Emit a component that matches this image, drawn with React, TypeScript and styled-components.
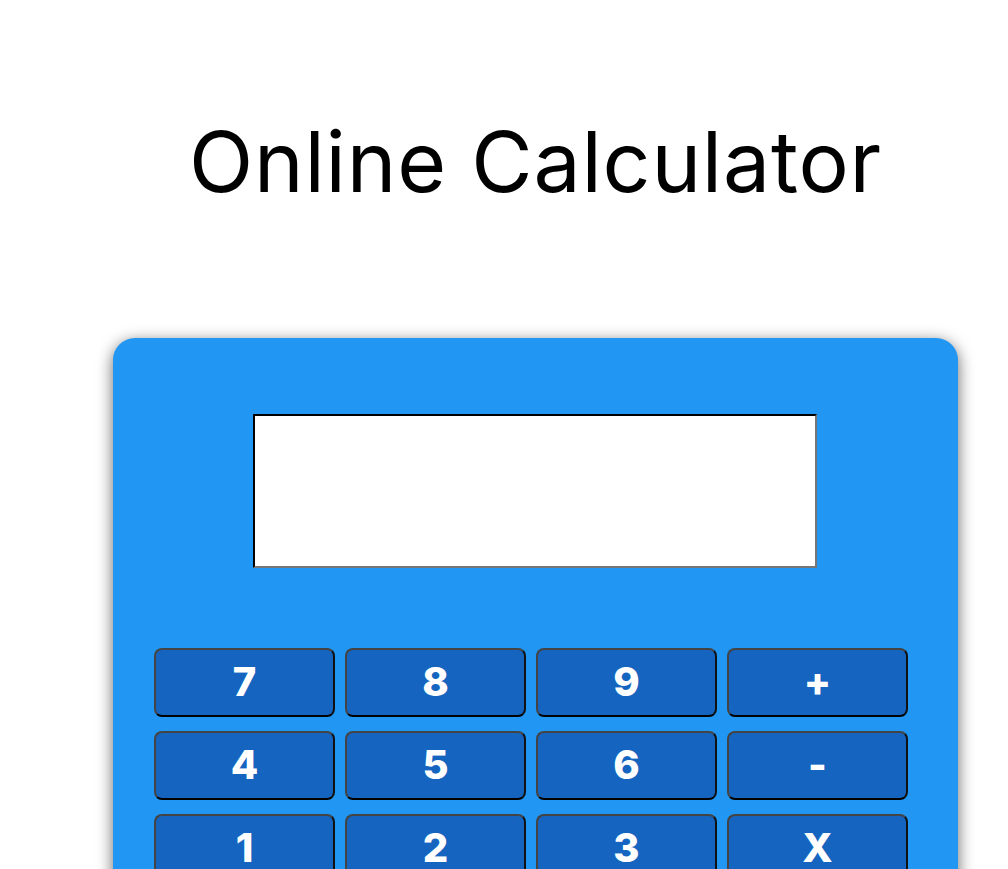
import styled, { createGlobalStyle } from "styled-components";

const GlobalStyle = createGlobalStyle`
  html, body {
    margin: 0;
    padding: 0;
    background: #ffffff;
    font-family: "Inter", "Noto Sans", sans-serif;
    overflow: hidden;
  }
`;

const keys = ["7", "8", "9", "+", "4", "5", "6", "-", "1", "2", "3", "X", "0", ".", "=", "/"];

const App = () => {
  return (
    <>
      <GlobalStyle />
      <Page>
        <Title>Online Calculator</Title>
        <Calculator>
          <Display readOnly />
          <Keypad>
            {keys.map((k) => (
              <Key key={k}>{k}</Key>
            ))}
          </Keypad>
        </Calculator>
      </Page>
    </>
  );
};

export default App;

const Page = styled.div`
  width: 845px;
  margin-left: 113px;
  padding-top: 107px;
`;

const Title = styled.h1`
  margin: 0 0 121px;
  text-align: center;
  font-family: "Inter", "Noto Sans", sans-serif;
  font-weight: 400;
  font-size: 84px;
  line-height: 110px;
  color: #000;
  letter-spacing: 0.8px;
`;

const Calculator = styled.div`
  background-color: #2196f3;
  border-radius: 22px;
  box-shadow: 0 4px 16px rgba(0, 0, 0, 0.6);
  padding: 76px 51px 40px 41px;
  display: flex;
  flex-direction: column;
`;

const Display = styled.input`
  box-sizing: border-box;
  width: 564px;
  height: 154px;
  margin: 0 0 80px 99px;
  border: 2px inset #767676;
  border-top-color: #222;
  border-left-color: #222;
  background: #fff;
`;

const Keypad = styled.div`
  display: grid;
  grid-template-columns: repeat(4, 181px);
  column-gap: 10px;
  row-gap: 14px;
`;

const Key = styled.button`
  height: 69px;
  background-color: #1565c0;
  color: #fff;
  border: 2px solid #444;
  border-bottom-color: #000;
  border-right-color: #111;
  border-radius: 8px;
  font-family: "Inter", "Noto Sans", sans-serif;
  font-weight: 800;
  font-size: 40px;
  padding: 0 0 3px;
`;
